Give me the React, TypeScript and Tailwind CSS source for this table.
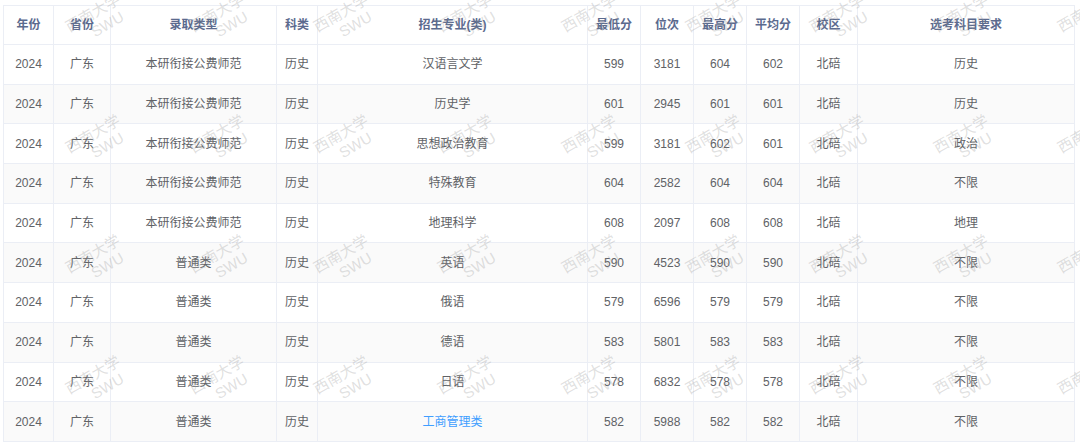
import React from "react";

const columns = [
  { title: "年份", width: 50 },
  { title: "省份", width: 57 },
  { title: "录取类型", width: 166 },
  { title: "科类", width: 41 },
  { title: "招生专业(类)", width: 270 },
  { title: "最低分", width: 53 },
  { title: "位次", width: 53 },
  { title: "最高分", width: 53 },
  { title: "平均分", width: 53 },
  { title: "校区", width: 58 },
  { title: "选考科目要求", width: 217 },
];

type Row = {
  type: string;
  major: string;
  min: number;
  rank: number;
  max: number;
  avg: number;
  req: string;
  link?: boolean;
};

const rows: Row[] = [
  { type: "本研衔接公费师范", major: "汉语言文学", min: 599, rank: 3181, max: 604, avg: 602, req: "历史" },
  { type: "本研衔接公费师范", major: "历史学", min: 601, rank: 2945, max: 601, avg: 601, req: "历史" },
  { type: "本研衔接公费师范", major: "思想政治教育", min: 599, rank: 3181, max: 602, avg: 601, req: "政治" },
  { type: "本研衔接公费师范", major: "特殊教育", min: 604, rank: 2582, max: 604, avg: 604, req: "不限" },
  { type: "本研衔接公费师范", major: "地理科学", min: 608, rank: 2097, max: 608, avg: 608, req: "地理" },
  { type: "普通类", major: "英语", min: 590, rank: 4523, max: 590, avg: 590, req: "不限" },
  { type: "普通类", major: "俄语", min: 579, rank: 6596, max: 579, avg: 579, req: "不限" },
  { type: "普通类", major: "德语", min: 583, rank: 5801, max: 583, avg: 583, req: "不限" },
  { type: "普通类", major: "日语", min: 578, rank: 6832, max: 578, avg: 578, req: "不限" },
  { type: "普通类", major: "工商管理类", min: 582, rank: 5988, max: 582, avg: 582, req: "不限", link: true },
];

// repeating "西南大学 SWU" watermark laid over the table
function Watermarks() {
  const marks: { x: number; y: number }[] = [];
  for (let j = 0; j < 4; j++) {
    for (let i = -1; i < 9; i++) {
      marks.push({ x: 97 + 124 * i, y: 20 + 120.5 * j });
    }
  }
  return (
    <div className="pointer-events-none absolute inset-0 overflow-hidden">
      {marks.map((m, idx) => (
        <div
          key={idx}
          className="absolute flex flex-col items-center text-[15px] leading-[17px] text-[rgba(150,150,150,0.3)]"
          style={{ left: m.x, top: m.y, transform: "translate(-50%, -50%) rotate(-30deg)" }}
        >
          <span className="whitespace-nowrap">西南大学</span>
          <span className="ml-[14px] whitespace-nowrap">SWU</span>
        </div>
      ))}
    </div>
  );
}

export default function App() {
  return (
    <div
      className="relative h-[448px] w-[1080px] overflow-hidden bg-white pl-[3px] pt-[5px]"
      style={{ fontFamily: '"Liberation Sans", "Noto Sans CJK SC", sans-serif' }}
    >
      <table className="w-[1071px] table-fixed border-collapse border border-[#ebeef5] text-[12px]">
        <colgroup>
          {columns.map((c) => (
            <col key={c.title} style={{ width: c.width }} />
          ))}
        </colgroup>
        <thead>
          <tr className="h-[39px] bg-white">
            {columns.map((c) => (
              <th
                key={c.title}
                className="border border-[#ebeef5] p-0 text-center font-bold text-[#5b6a8e]"
              >
                {c.title}
              </th>
            ))}
          </tr>
        </thead>
        <tbody>
          {rows.map((r, i) => {
            const cells = [
              "2024",
              "广东",
              r.type,
              "历史",
              r.major,
              String(r.min),
              String(r.rank),
              String(r.max),
              String(r.avg),
              "北碚",
              r.req,
            ];
            return (
              <tr key={i} className={i % 2 === 1 ? "h-[39.7px] bg-[#fafafa]" : "h-[39.7px] bg-white"}>
                {cells.map((v, k) => (
                  <td
                    key={k}
                    className={
                      k === 4 && r.link
                        ? "border border-[#ebeef5] p-0 text-center text-[#409eff]"
                        : "border border-[#ebeef5] p-0 text-center text-[#606266]"
                    }
                  >
                    {v}
                  </td>
                ))}
              </tr>
            );
          })}
        </tbody>
      </table>
      <Watermarks />
    </div>
  );
}
